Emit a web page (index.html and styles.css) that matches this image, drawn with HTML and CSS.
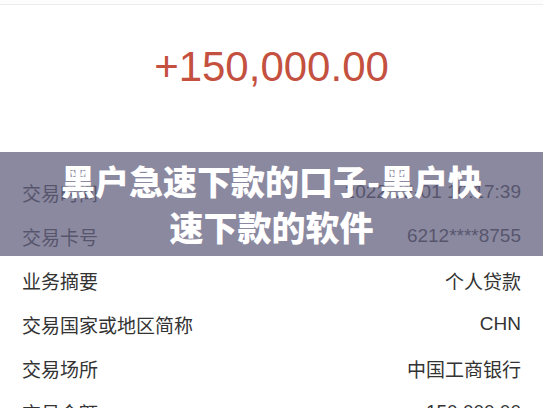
FILE: index.html
```html
<!DOCTYPE html>
<html lang="zh-CN">
<head>
  <meta charset="UTF-8">
  <meta name="viewport" content="width=device-width, initial-scale=1.0">
  <title>黑户急速下款的口子-黑户快速下款的软件</title>
  <link rel="stylesheet" href="styles.css">
</head>
<body>
  <div class="page">
    <div class="topbar"></div>
    <div class="summary">+150,000.00</div>

    <div class="details">
      <div class="row"><span>交易时间</span><span>2022-02-01 10:17:39</span></div>
      <div class="row"><span>交易卡号</span><span>6212****8755</span></div>
      <div class="row"><span>业务摘要</span><span>个人贷款</span></div>
      <div class="row"><span>交易国家或地区简称</span><span>CHN</span></div>
      <div class="row"><span>交易场所</span><span>中国工商银行</span></div>
      <div class="row"><span>交易金额</span><span>150,000.00</span></div>
    </div>

    <div class="banner">
      <h1>黑户急速下款的口子-黑户快速下款的软件</h1>
    </div>
  </div>
</body>
</html>
```

FILE: styles.css
```css
body {
  margin: 0;
  background-color: #fff;
  font-family: "Liberation Sans", "Noto Sans CJK SC", sans-serif;
  overflow: hidden;
}

.page {
  position: relative;
  height: 408px;
  overflow: hidden;
}

.topbar {
  height: 4px;
  border-bottom: 1px solid #ececec;
  background-color: #fdfdfd;
}

.summary {
  padding: 37px 0 78px;
  line-height: 50px;
  font-size: 42px;
  color: #c4503f;
  text-align: center;
}

.row {
  display: flex;
  justify-content: space-between;
  align-items: center;
  height: 44px;
  padding: 0 22px;
  font-size: 19px;
  color: #333;
}

.banner {
  position: absolute;
  top: 152px;
  left: 0;
  right: 0;
  height: 104px;
  display: flex;
  align-items: center;
  justify-content: center;
  padding: 0 50px;
  background-color: rgba(100, 97, 128, 0.75);
}

.banner h1 {
  margin: 0;
  font-family: "Noto Sans CJK SC", sans-serif;
  font-size: 34px;
  font-weight: 900;
  line-height: 46px;
  color: #fff;
  text-align: center;
}
```
